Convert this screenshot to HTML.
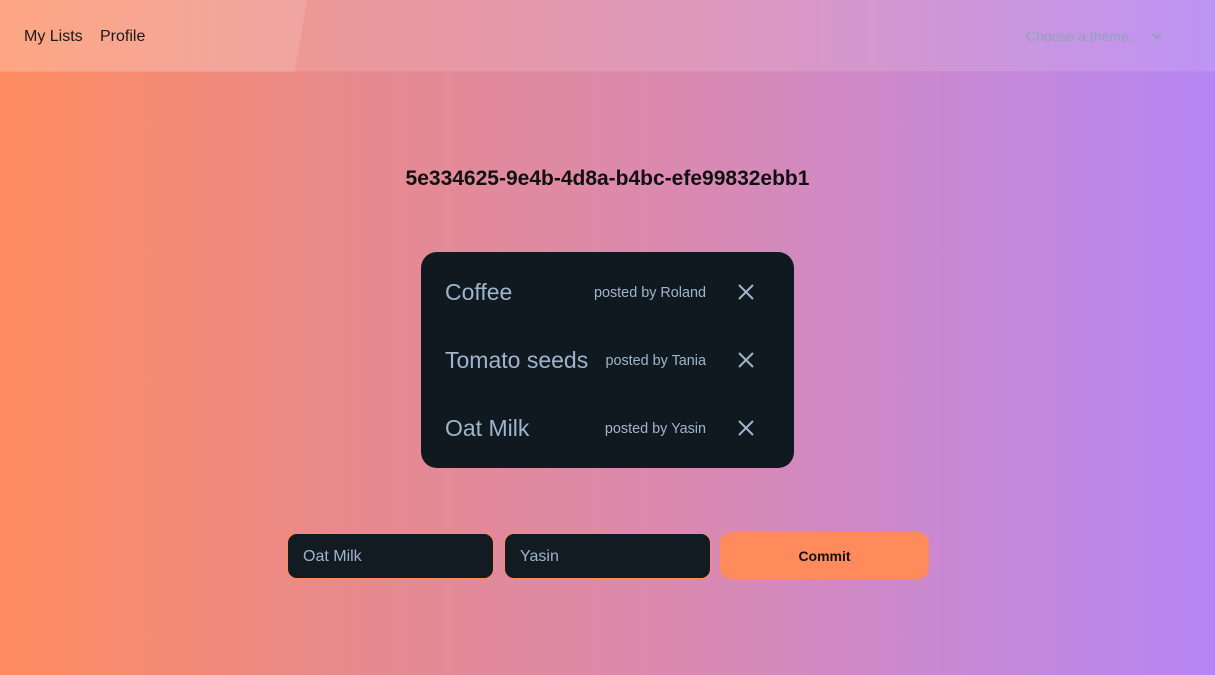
<!DOCTYPE html>
<html><head><meta charset="utf-8"><style>
*{margin:0;padding:0;box-sizing:border-box}
body{width:1215px;height:675px;overflow:hidden;font-family:"Liberation Sans",sans-serif;background:linear-gradient(90deg,#fe8b5e 0%,#e78a8f 30%,#d88ab6 60%,#b586f4 100%);position:relative}
.hdr{position:absolute;left:0;top:0;width:1215px;height:72px;background:rgba(255,255,255,0.12);border-bottom:1px solid rgba(200,120,140,0.25)}
.hl{position:absolute;left:0;top:0;height:72px;width:307px;background:rgba(255,255,255,0.13);clip-path:polygon(0 0,100% 0,96% 100%,0 100%)}
.nav{position:absolute;top:27px;font-size:16px;color:#1a1a1a}
.theme{position:absolute;left:1026px;top:28px;font-size:14px;color:#8fa3b8}
.title{position:absolute;top:167px;width:100%;text-align:center;font-weight:bold;font-size:21px;color:#111}
.card{position:absolute;left:421px;top:252px;width:373px;height:216px;background:#111920;border-radius:16px}
.row{position:absolute;left:24px;right:0;height:30px}
.name{position:absolute;left:0;top:0;font-size:23px;color:#9fb5cc}
.by{position:absolute;right:88px;top:6px;font-size:14.4px;color:#9fb5cc}
.x{position:absolute;left:292px;top:4px}
.inp{position:absolute;top:533px;width:207px;height:46px;background:#131b22;border:1px solid #ff8a5c;border-radius:10px;color:#9fb5cc;font-size:16px;padding:14px 15px}
.btn{position:absolute;left:720px;top:532px;width:209px;height:47px;background:#ff8a5c;border-radius:11px;text-align:center;font-weight:bold;font-size:14px;line-height:48px;color:#111}
</style></head><body>
<div class="hdr"><div class="hl"></div></div>
<div class="nav" style="left:24px;top:28px">My Lists</div>
<div class="nav" style="left:100px;top:28px">Profile</div>
<div class="theme">Choose a theme...</div>
<svg style="position:absolute;left:1151px;top:31px" width="12" height="10" viewBox="0 0 12 10"><path d="M2 3l4 4 4-4" stroke="#8fa3b8" stroke-width="2" fill="none"/></svg>
<div class="title">5e334625-9e4b-4d8a-b4bc-efe99832ebb1</div>
<div class="card">
 <div class="row" style="top:27px"><div class="name">Coffee</div><div class="by">posted by Roland</div><svg class="x" width="18" height="18" viewBox="0 0 18 18"><path d="M2 2l14 14M16 2L2 16" stroke="#9fb5cc" stroke-width="2"/></svg></div>
 <div class="row" style="top:95px"><div class="name">Tomato seeds</div><div class="by">posted by Tania</div><svg class="x" width="18" height="18" viewBox="0 0 18 18"><path d="M2 2l14 14M16 2L2 16" stroke="#9fb5cc" stroke-width="2"/></svg></div>
 <div class="row" style="top:163px"><div class="name">Oat Milk</div><div class="by">posted by Yasin</div><svg class="x" width="18" height="18" viewBox="0 0 18 18"><path d="M2 2l14 14M16 2L2 16" stroke="#9fb5cc" stroke-width="2"/></svg></div>
</div>
<div class="inp" style="left:287px">Oat Milk</div>
<div class="inp" style="left:504px">Yasin</div>
<div class="btn">Commit</div>
</body></html>
